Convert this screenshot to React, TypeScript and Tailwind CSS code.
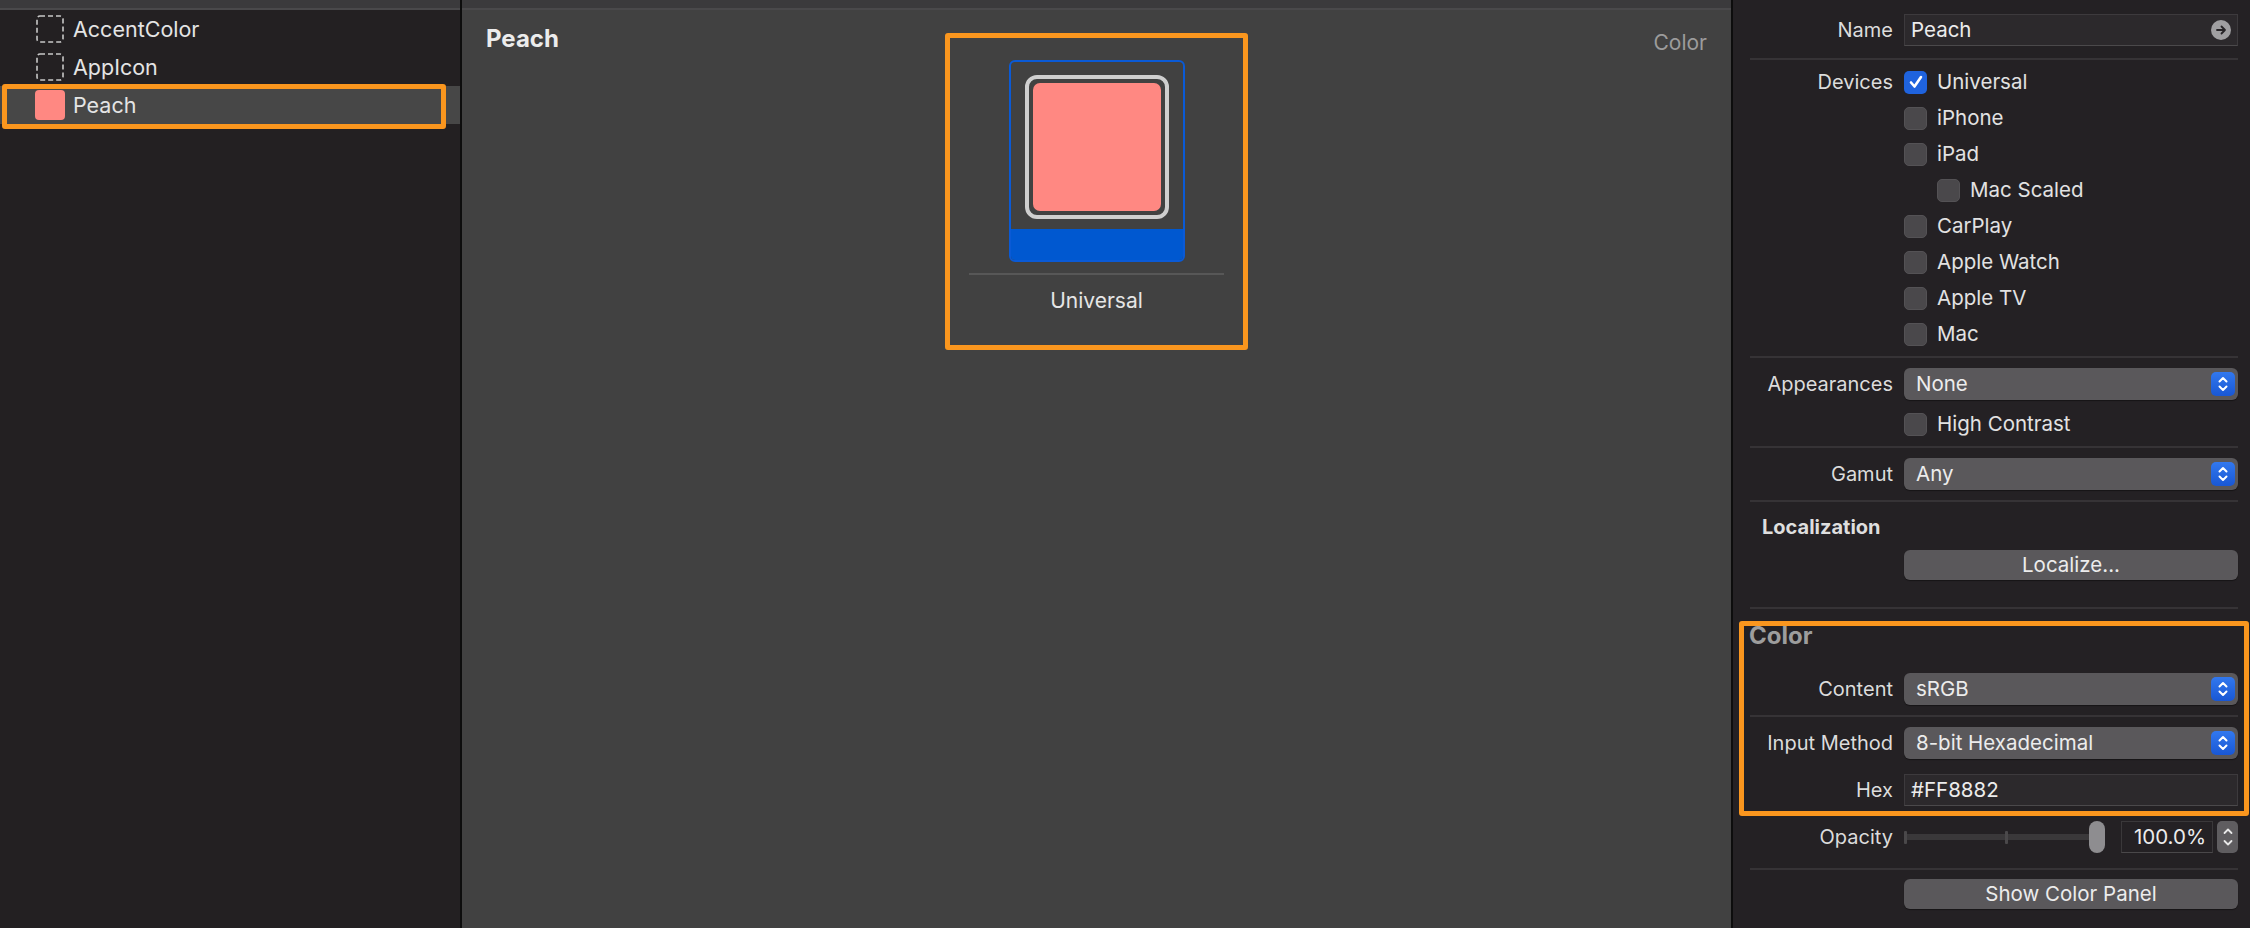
import React from "react"

const deviceRows = [
  { label: "Universal", checked: true, indent: false },
  { label: "iPhone", checked: false, indent: false },
  { label: "iPad", checked: false, indent: false },
  { label: "Mac Scaled", checked: false, indent: true },
  { label: "CarPlay", checked: false, indent: false },
  { label: "Apple Watch", checked: false, indent: false },
  { label: "Apple TV", checked: false, indent: false },
  { label: "Mac", checked: false, indent: false },
]

function TopStrip() {
  return <div className="h-[10px] shrink-0 border-b-2 border-[#4a494b] bg-[#3b3a3c]" />
}

function DashedIcon() {
  return (
    <svg width="30" height="30" viewBox="0 0 30 30" className="shrink-0">
      <rect x="2" y="2" width="26" height="26" rx="3" fill="none" stroke="#c8c8c8" strokeWidth="1.6" strokeDasharray="5 3" />
    </svg>
  )
}

function NavRow({ label, swatch, selected }: { label: string; swatch?: boolean; selected?: boolean }) {
  return (
    <div className={`relative flex h-[38px] items-center gap-[8px] pl-[35px] ${selected ? "bg-[#474747]" : ""}`}>
      {swatch ? <div className="h-[30px] w-[30px] shrink-0 rounded-[4px] bg-[#ff8882]" /> : <DashedIcon />}
      <span className="text-[21.5px] text-[#e4e4e4]">{label}</span>
      {selected && (
        <div className="pointer-events-none absolute left-[2px] top-[-2px] h-[45px] w-[444px] rounded-[3px] border-[5px] border-[#fa961e]" />
      )}
    </div>
  )
}

function UpDown() {
  return (
    <svg width="12" height="16" viewBox="0 0 12 16" fill="none" stroke="white" strokeWidth="2" strokeLinecap="round" strokeLinejoin="round">
      <path d="M2.5 5.5 6 2 9.5 5.5" />
      <path d="M2.5 10.5 6 14 9.5 10.5" />
    </svg>
  )
}

function Popup({ value }: { value: string }) {
  return (
    <div className="flex h-[32px] items-center justify-between rounded-[6px] bg-[#5a585b] pl-[12px] pr-[3px] shadow-[0_1px_1px_rgba(0,0,0,0.4)]">
      <span className="text-[20.5px] text-[#ececec]">{value}</span>
      <div className="flex h-[24px] w-[24px] items-center justify-center rounded-[5px] bg-gradient-to-b from-[#3278ee] to-[#1957d4]">
        <UpDown />
      </div>
    </div>
  )
}

function Checkbox({ checked }: { checked?: boolean }) {
  if (checked) {
    return (
      <div className="flex h-[23px] w-[23px] shrink-0 items-center justify-center rounded-[5px] bg-[#1f63de]">
        <svg width="16" height="16" viewBox="0 0 16 16" fill="none" stroke="white" strokeWidth="2.6" strokeLinecap="round" strokeLinejoin="round">
          <path d="M3 8.5 6.5 12.5 13 3" />
        </svg>
      </div>
    )
  }
  return <div className="h-[23px] w-[23px] shrink-0 rounded-[5px] border border-[#545255] bg-[#4a484b]" />
}

function Row({ label, children, className = "" }: { label?: React.ReactNode; children?: React.ReactNode; className?: string }) {
  return (
    <div className={`flex items-center ${className}`}>
      <div className="w-[160px] shrink-0 text-right text-[20px] text-[#dcdcdc]">{label}</div>
      <div className="ml-[11px] w-[334px]">{children}</div>
    </div>
  )
}

function Divider({ className = "" }: { className?: string }) {
  return <div className={`ml-[17px] mr-[12px] h-[2px] bg-[#363336] ${className}`} />
}

function Button({ label }: { label: string }) {
  return (
    <div className="flex h-[30px] items-center justify-center rounded-[6px] bg-[#5a585b] text-[20.5px] text-[#ececec] shadow-[0_1px_1px_rgba(0,0,0,0.4)]">
      {label}
    </div>
  )
}

function Field({ value, arrow }: { value: string; arrow?: boolean }) {
  return (
    <div className="flex h-[32px] items-center justify-between border border-[#3d3a3d] border-b-[#4b494b] bg-[#2c292c] pl-[6px] pr-[6px]">
      <span className="text-[20.5px] text-[#ececec]">{value}</span>
      {arrow && (
        <div className="flex h-[20px] w-[20px] items-center justify-center rounded-full bg-[#a09fa1]">
          <svg width="12" height="12" viewBox="0 0 12 12" fill="none" stroke="#262326" strokeWidth="1.8" strokeLinecap="round" strokeLinejoin="round">
            <path d="M2 6h8M6.5 2.5 10 6 6.5 9.5" />
          </svg>
        </div>
      )}
    </div>
  )
}

export default function App() {
  return (
    <div className="flex h-[928px] w-[2250px] overflow-hidden bg-[#232022] font-[Inter,sans-serif]">
      {/* navigator */}
      <aside className="flex w-[460px] shrink-0 flex-col bg-[#232022]">
        <TopStrip />
        <NavRow label="AccentColor" />
        <NavRow label="AppIcon" />
        <NavRow label="Peach" swatch selected />
      </aside>
      <div className="w-[2px] shrink-0 bg-[#0d0d0d]" />

      {/* asset editor */}
      <main className="flex flex-1 flex-col bg-[#414141]">
        <TopStrip />
        <div className="grid grid-cols-[1fr_auto_1fr] px-6 pt-[14px]">
          <h1 className="text-[24px] font-bold leading-[30px] text-[#ececec]">Peach</h1>
          <div className="mt-[9px] flex h-[317px] w-[303px] flex-col items-center rounded-[3px] border-[5px] border-[#fa961e] pt-[22px]">
            <div className="flex h-[202px] w-[176px] flex-col overflow-hidden rounded-[6px] border-2 border-[#0a5ad6]">
              <div className="flex flex-1 items-center justify-center pt-[3px]">
                <div className="h-[144px] w-[144px] rounded-[12px] border-[4px] border-[#cfcfcf] p-[4px]">
                  <div className="h-full w-full rounded-[7px] bg-[#ff8882]" />
                </div>
              </div>
              <div className="h-[31px] bg-[#0058d0]" />
            </div>
            <div className="mt-[11px] h-[2px] w-[255px] bg-[#575757]" />
            <div className="mt-[10px] text-[21px] text-[#e6e6e6]">Universal</div>
          </div>
          <div className="mt-[4px] text-right text-[21px] leading-[30px] text-[#9c9c9c]">Color</div>
        </div>
      </main>
      <div className="w-[2px] shrink-0 bg-[#0d0d0d]" />

      {/* inspector */}
      <aside className="flex w-[517px] shrink-0 flex-col bg-[#242124] pt-[14px]">
        <Row label="Name">
          <Field value="Peach" arrow />
        </Row>
        <Divider className="mt-[12px]" />

        <div className="mt-[4px] flex flex-col">
          {deviceRows.map((d, i) => (
            <Row key={d.label} label={i === 0 ? "Devices" : ""} className="h-[36px]">
              <div className={`flex items-center gap-[10px] ${d.indent ? "pl-[33px]" : ""}`}>
                <Checkbox checked={d.checked} />
                <span className="text-[20.5px] text-[#e2e2e2]">{d.label}</span>
              </div>
            </Row>
          ))}
        </div>
        <Divider className="mt-[4px]" />

        <Row label="Appearances" className="mt-[10px]">
          <Popup value="None" />
        </Row>
        <Row className="mt-[6px] h-[36px]">
          <div className="flex items-center gap-[10px]">
            <Checkbox />
            <span className="text-[20.5px] text-[#e2e2e2]">High Contrast</span>
          </div>
        </Row>
        <Divider className="mt-[4px]" />

        <Row label="Gamut" className="mt-[10px]">
          <Popup value="Any" />
        </Row>
        <Divider className="mt-[10px]" />

        <div className="mt-[12px] h-[26px] pl-[29px] text-[20px] font-bold leading-[26px] text-[#dedede]">Localization</div>
        <Row className="mt-[10px]">
          <Button label="Localize..." />
        </Row>
        <Divider className="mt-[27px]" />

        <div className="relative mt-[12px] pb-[10px]">
          <div className="pointer-events-none absolute left-[6px] right-[1px] top-0 bottom-0 rounded-[3px] border-[5px] border-[#fa961e]" />
          <div className="h-[30px] pl-[16px] text-[24px] font-bold leading-[30px] text-[#9d9d9d]">Color</div>
          <Row label="Content" className="mt-[22px]">
            <Popup value="sRGB" />
          </Row>
          <Divider className="mt-[10px]" />
          <Row label="Input Method" className="mt-[10px]">
            <Popup value="8-bit Hexadecimal" />
          </Row>
          <Row label="Hex" className="mt-[15px]">
            <Field value="#FF8882" />
          </Row>
        </div>

        <Row label="Opacity" className="mt-[5px] h-[32px]">
          <div className="flex items-center">
            <div className="relative h-[32px] w-[202px]">
              <div className="absolute left-0 right-[8px] top-[13px] h-[6px] rounded-full bg-[#3a383a]" />
              <div className="absolute left-0 top-[10px] h-[13px] w-[3px] rounded-[1px] bg-[#4a484a]" />
              <div className="absolute left-[101px] top-[10px] h-[13px] w-[3px] rounded-[1px] bg-[#4a484a]" />
              <div className="absolute right-0 top-0 h-[32px] w-[16px] rounded-full bg-[#8e8d90]" />
            </div>
            <div className="ml-[16px] flex h-[32px] w-[92px] items-center justify-end border border-[#3a383a] border-b-[#4a484a] bg-[#242124] pr-[6px] text-[20.5px] text-[#ececec]">
              100.0%
            </div>
            <div className="ml-[4px] flex h-[32px] w-[21px] items-center justify-center rounded-[5px] bg-[#5f5d60]">
              <svg width="12" height="22" viewBox="0 0 12 22" fill="none" stroke="#e8e8e8" strokeWidth="1.8" strokeLinecap="round" strokeLinejoin="round">
                <path d="M2.5 7 6 3.5 9.5 7" />
                <path d="M2.5 15 6 18.5 9.5 15" />
              </svg>
            </div>
          </div>
        </Row>
        <Divider className="mt-[15px]" />
        <Row className="mt-[9px]">
          <Button label="Show Color Panel" />
        </Row>
      </aside>
    </div>
  )
}
